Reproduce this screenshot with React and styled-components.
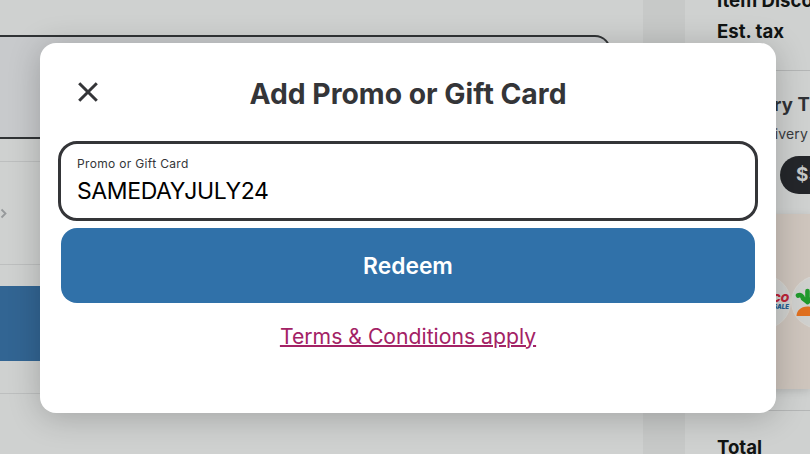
import React from "react";
import styled, { createGlobalStyle } from "styled-components";

function CheckoutColumn() {
  return (
    <Column>
      <OptionCard />
      <DetailRow>
        <Chevron viewBox="0 0 8 12">
          <path d="M1.5 2.5l4 4-4 4" />
        </Chevron>
      </DetailRow>
      <ContinueBlock>
        <ContinueBar />
      </ContinueBlock>
    </Column>
  );
}

function CostcoLogo() {
  return (
    <StoreBadge>
      <StoreName>COSTCO</StoreName>
      <StoreSub>WHOLESALE</StoreSub>
    </StoreBadge>
  );
}

function CarrotLogo() {
  return (
    <StoreBadge>
      <svg width="52" height="52" viewBox="0 0 52 52">
        <path
          d="M12.5 15v9M3 19.500c2.500-1 4.500.500 5 3l4.500 3.500M22 19.500c-2.500-1-4.500.500-5 3l-4.500 3.500"
          fill="none"
          stroke="#219a2c"
          strokeWidth="4.600"
          strokeLinejoin="round"
          strokeLinecap="round"
        />
        <path d="M1.500 40c0-5 4-9.500 11-9.500s11 4.500 11 9.500z" fill="#e07020" />
      </svg>
    </StoreBadge>
  );
}

function SummaryColumn() {
  return (
    <Summary>
      <SummaryLine>Item Discounts</SummaryLine>
      <SummaryLine>Est. tax</SummaryLine>
      <TipSection>
        <h3>Delivery Tip</h3>
        <p>After delivery</p>
        <TipPill>$5</TipPill>
      </TipSection>
      <Banner>
        <CostcoLogo />
        <CarrotLogo />
      </Banner>
      <TotalLine>Total</TotalLine>
    </Summary>
  );
}

function PromoDialog() {
  return (
    <Dialog role="dialog" aria-label="Add Promo or Gift Card">
      <DialogHeader>
        <CloseButton aria-label="Close">
          <svg width="20" height="20" viewBox="0 0 20 20">
            <path d="M1.2 1.2l17.6 17.6M18.8 1.2L1.2 18.8" />
          </svg>
        </CloseButton>
        <h2>Add Promo or Gift Card</h2>
      </DialogHeader>
      <Field>
        <FieldLabel>Promo or Gift Card</FieldLabel>
        <FieldValue>SAMEDAYJULY24</FieldValue>
      </Field>
      <RedeemButton>Redeem</RedeemButton>
      <TermsLink>Terms &amp; Conditions apply</TermsLink>
    </Dialog>
  );
}

function App() {
  return (
    <Screen>
      <GlobalStyle />
      <CheckoutColumn />
      <SummaryColumn />
      <PromoDialog />
    </Screen>
  );
}

export default App;

const GlobalStyle = createGlobalStyle`
  * {
    box-sizing: border-box;
    margin: 0;
    padding: 0;
  }
  body {
    font-family: Inter, "Liberation Sans", sans-serif;
    overflow: hidden;
  }
`;

const Screen = styled.div`
  position: relative;
  display: flex;
  gap: 42px;
  width: 810px;
  height: 454px;
  overflow: hidden;
  background: #c7c9c8;
`;

const Column = styled.main`
  width: 643px;
  flex-shrink: 0;
  padding-top: 35px;
  background: #cfd1d0;
`;

const OptionCard = styled.div`
  width: 611px;
  height: 104px;
  border: 2px solid #303335;
  border-left: 0;
  border-radius: 0 16px 16px 0;
  background: #c8cacc;
`;

const DetailRow = styled.div`
  display: flex;
  align-items: center;
  height: 104px;
  margin-top: 22px;
  border: solid #bdbfbf;
  border-width: 1px 0;
`;

const Chevron = styled.svg`
  width: 8px;
  height: 12px;
  fill: none;
  stroke: #96999b;
  stroke-width: 1.8;
`;

const ContinueBlock = styled.div`
  padding: 21px 0 32px;
  border-bottom: 1px solid #bdbfbf;
`;

const ContinueBar = styled.div`
  width: 610px;
  height: 75px;
  background: #326593;
`;

const Summary = styled.aside`
  flex: 1;
  min-width: 0;
  overflow: hidden;
  background: #cfd1d0;
`;

const SummaryLine = styled.div`
  height: 32px;
  margin-top: -1px;
  padding-left: 32px;
  font-size: 18.6px;
  font-weight: 700;
  line-height: 2px;
  white-space: nowrap;
  color: #111413;
  & + & {
    line-height: 3px;
  }
`;

const TipSection = styled.section`
  height: 144px;
  margin-top: 8px;
  padding: 21px 0 0 32px;
  border-top: 1px solid #b4b6b6;
  white-space: nowrap;
  color: #303236;
  h3 {
    font-size: 18.5px;
    line-height: 24px;
    letter-spacing: 0.1px;
  }
  p {
    margin-top: 7px;
    font-size: 14px;
    line-height: 22px;
    letter-spacing: 0.15px;
    color: #393b3e;
  }
`;

const TipPill = styled.div`
  width: 82px;
  height: 38px;
  margin: 11px 0 0 63px;
  padding-left: 16px;
  border-radius: 19px;
  background: #24262a;
  color: #c5c8c8;
  font-size: 19px;
  font-weight: 700;
  line-height: 38px;
`;

const Banner = styled.div`
  display: flex;
  align-items: center;
  height: 175px;
  padding-left: 52px;
  background: #cec5bd;
  box-shadow: 0 2px 8px rgba(0, 0, 0, 0.13);
`;

const StoreBadge = styled.div`
  display: flex;
  flex-direction: column;
  align-items: flex-end;
  justify-content: center;
  flex-shrink: 0;
  width: 54px;
  height: 54px;
  padding-right: 1px;
  border: 1px solid #d6d4cf;
  border-radius: 50%;
  background: #cfd0ce;
  font-style: italic;
  & + & {
    width: 58px;
    margin-left: 0;
    padding-right: 1px;
  }
`;

const StoreName = styled.span`
  font-size: 11px;
  font-weight: 900;
  line-height: 10px;
  color: #bd2438;
`;

const StoreSub = styled.span`
  font-size: 6px;
  font-weight: 900;
  line-height: 7px;
  color: #205b91;
`;

const TotalLine = styled.div`
  height: 44px;
  margin-top: 21px;
  padding: 25px 0 0 32px;
  border-top: 1px solid #b4b6b6;
  font-size: 18.6px;
  font-weight: 700;
  line-height: 22px;
  color: #111413;
`;

const Dialog = styled.div`
  position: absolute;
  top: 43px;
  left: 40px;
  display: flex;
  flex-direction: column;
  width: 736px;
  height: 370px;
  padding: 0 18px;
  border-radius: 16px;
  background: #fff;
  box-shadow: 0 4px 32px rgba(0, 0, 0, 0.22);
`;

const DialogHeader = styled.header`
  display: grid;
  grid-template-columns: 60px 1fr 60px;
  align-items: center;
  height: 98px;
  h2 {
    padding-top: 4px;
    font-size: 28.3px;
    font-weight: 700;
    line-height: 36px;
    text-align: center;
    white-space: nowrap;
    color: #343538;
  }
`;

const CloseButton = styled.button`
  display: flex;
  width: 20px;
  height: 20px;
  margin-left: 20px;
  border: 0;
  background: none;
  svg {
    fill: none;
    stroke: #343538;
    stroke-width: 3;
  }
`;

const Field = styled.label`
  display: flex;
  flex-direction: column;
  height: 80px;
  padding: 12px 16px 0;
  border: 3px solid #343538;
  border-radius: 19px;
`;

const FieldLabel = styled.span`
  font-size: 12px;
  line-height: 16px;
  letter-spacing: 0.33px;
  color: #343538;
`;

const FieldValue = styled.span`
  margin-top: 5px;
  font-size: 23px;
  line-height: 28px;
  letter-spacing: -0.4px;
  color: #000;
`;

const RedeemButton = styled.button`
  height: 75px;
  margin: 7px 3px 0;
  border: 0;
  border-radius: 16px;
  background: #3071a9;
  color: #fff;
  font-family: inherit;
  font-size: 22.8px;
  font-weight: 600;
`;

const TermsLink = styled.a`
  align-self: center;
  margin-top: 19px;
  font-size: 21.2px;
  line-height: 28px;
  color: #a32265;
  text-decoration: underline;
  text-decoration-thickness: 2px;
`;
